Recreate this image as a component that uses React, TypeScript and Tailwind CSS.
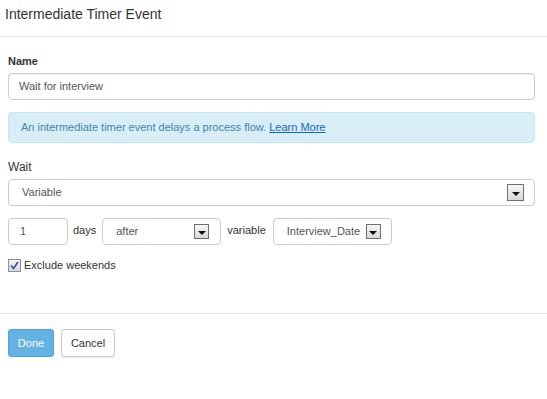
import React from "react";

function Arrow({ size = 17 }: { size?: number }) {
  return (
    <div
      className="flex items-center justify-center border border-[#6e6e6e] bg-gradient-to-b from-[#f6f6f6] to-[#d9d9d9]"
      style={{ width: size, height: size }}
    >
      <div className="mt-[3px] h-0 w-0 border-l-[4px] border-r-[4px] border-t-[4px] border-l-transparent border-r-transparent border-t-[#111]" />
    </div>
  );
}

export default function App() {
  return (
    <div
      className="w-[547px] h-[399px] bg-white text-[#333]"
      style={{ fontFamily: '"Liberation Sans", Arial, sans-serif' }}
    >
      <div className="h-[37px] border-b border-[#e5e5e5] pl-[5px] pt-[5px] text-[14px] leading-[18px] text-[#333]">
        Intermediate Timer Event
      </div>

      <div className="pl-[8px] pr-[12px]">
        <div className="mt-[17px] text-[11px] font-bold leading-[15px] text-[#333]">Name</div>
        <div className="mt-[4px] flex h-[27px] items-center rounded-[4px] border border-[#ccc] pl-[10px] text-[11px] text-[#555] shadow-[inset_0_1px_1px_rgba(0,0,0,0.05)]">
          Wait for interview
        </div>

        <div className="mt-[12px] flex h-[31px] items-center rounded-[4px] border border-[#bce8f1] bg-[#d9edf7] pl-[12px] text-[11px] text-[#3a87ad]">
          An intermediate timer event delays a process flow.&nbsp;
          <span className="text-[#0b6cbf] underline">Learn More</span>
        </div>

        <div className="mt-[17px] text-[12px] leading-[15px] text-[#333]">Wait</div>
        <div className="mt-[4px] flex h-[27px] items-center justify-between rounded-[4px] border border-[#ccc] pl-[13px] pr-[10px] text-[11px] text-[#555]">
          <span>Variable</span>
          <Arrow size={17} />
        </div>

        <div className="mt-[12px] flex h-[27px] items-center text-[11px]">
          <div className="flex h-[27px] w-[60px] items-center rounded-[4px] border border-[#ccc] pl-[11px] text-[#555]">
            1
          </div>
          <span className="ml-[5px] mb-[3px] text-[#333]">days</span>
          <div className="ml-[6px] flex h-[27px] w-[119px] items-center justify-between rounded-[4px] border border-[#ccc] pl-[13px] pr-[11px] text-[#555]">
            <span>after</span>
            <Arrow size={15} />
          </div>
          <span className="ml-[6px] mb-[3px] text-[#333]">variable</span>
          <div className="ml-[7px] flex h-[27px] w-[119px] items-center justify-between rounded-[4px] border border-[#ccc] pl-[13px] pr-[10px] text-[#555]">
            <span>Interview_Date</span>
            <Arrow size={15} />
          </div>
        </div>

        <div className="mt-[14px] flex h-[13px] items-center text-[11px] leading-[13px] text-[#333]">
          <div className="flex h-[13px] w-[13px] items-center justify-center border border-[#8f8f8f] bg-gradient-to-b from-[#eef2f7] to-[#d4dbe5]">
            <svg width="9" height="9" viewBox="0 0 9 9">
              <path d="M1 4.5 L3.5 7.5 L8 1" stroke="#2d4f9a" strokeWidth="1.6" fill="none" />
            </svg>
          </div>
          <span className="ml-[3px]">Exclude weekends</span>
        </div>
      </div>

      <div className="mt-[41px] border-t border-[#e5e5e5]" />

      <div className="flex pl-[8px] pt-[15px] text-[11px]">
        <div className="flex h-[28px] w-[46px] items-center justify-center rounded-[3px] border border-[#4fa3da] bg-[#64b2e4] text-white">
          Done
        </div>
        <div className="ml-[7px] flex h-[28px] w-[54px] items-center justify-center rounded-[3px] border border-[#ccc] bg-white text-[#333] shadow-[0_1px_1px_rgba(0,0,0,0.08)]">
          Cancel
        </div>
      </div>
    </div>
  );
}
